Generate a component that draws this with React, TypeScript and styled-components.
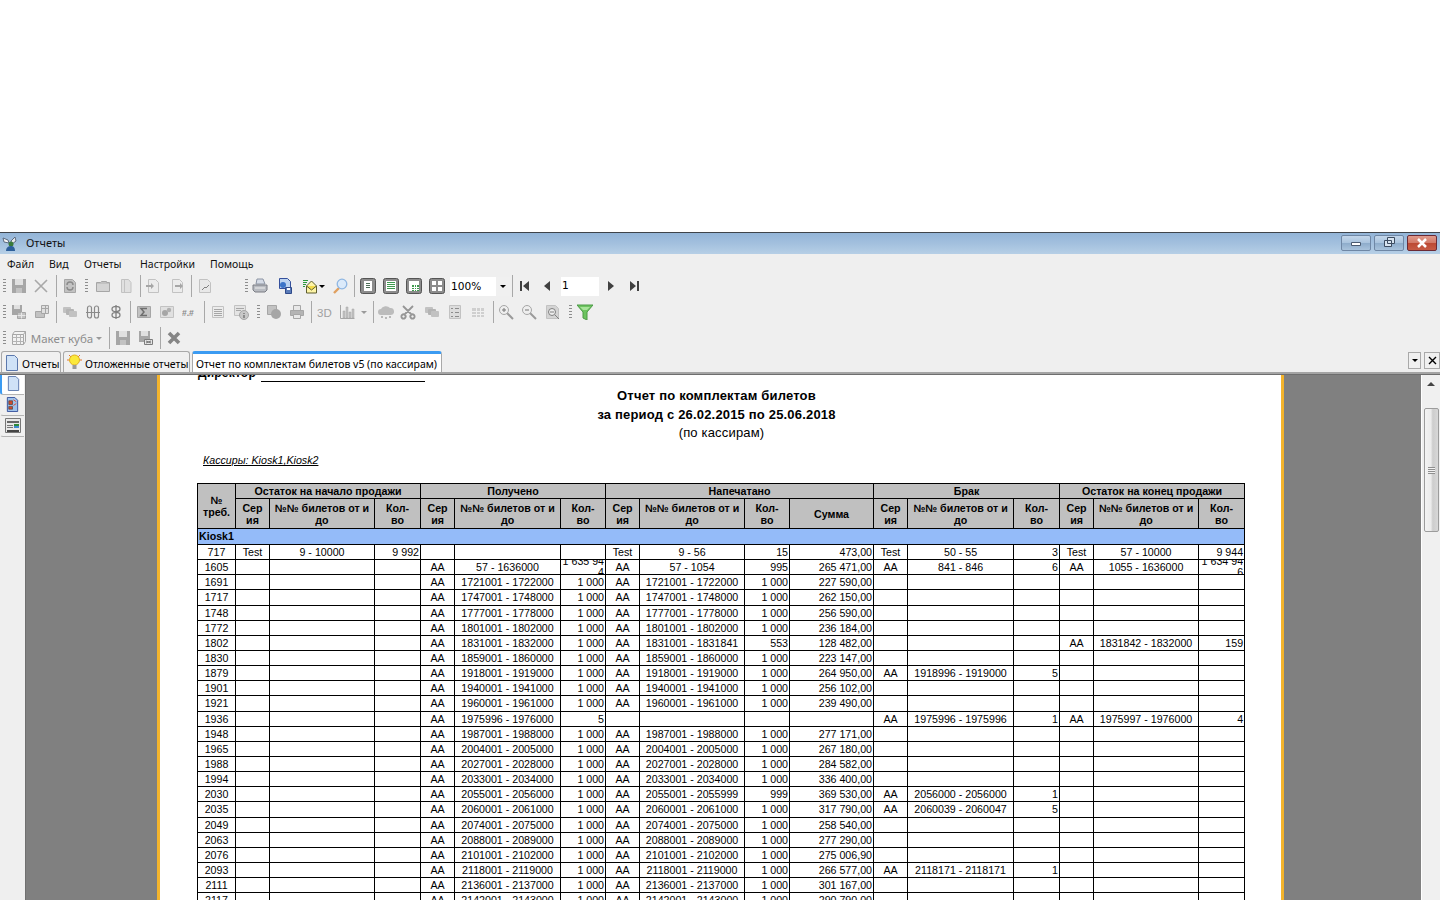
import * as React from "react";
import styled, { createGlobalStyle } from "styled-components";

const GlobalStyle = createGlobalStyle`
  html, body {
    margin: 0;
    padding: 0;
    height: 900px;
    overflow: hidden;
    background: #fff;
  }
`;

const Screen = styled.div`
  width: 1440px;
  height: 900px;
  display: flex;
  flex-direction: column;
  overflow: hidden;
  font-family: "Noto Sans", "DejaVu Sans", sans-serif;
  font-size: 10.5px;
  color: #000;
`;

const Blank = styled.div`
  height: 232px;
  flex: none;
  background: #fff;
`;

const TitleBar = styled.div`
  height: 21px;
  flex: none;
  display: flex;
  align-items: center;
  padding: 0 3px 0 2px;
  border-top: 1px solid #3f444a;
  background: linear-gradient(180deg, #93b5d8 0%, #a3c0de 50%, #b6cfe6 100%);
`;

const TitleText = styled.span`
  margin: 0 0 2px 8px;
  flex: 1;
  font-size: 11px;
  color: #111;
`;

const WinButton = styled.div<{ $close?: boolean }>`
  width: 30px;
  height: 16px;
  margin: 0 0 2px 3px;
  box-sizing: border-box;
  display: flex;
  align-items: center;
  justify-content: center;
  border: 1px solid ${p => (p.$close ? "#6b2a35" : "#6f87a5")};
  border-radius: 2px;
  background: ${p =>
    p.$close
      ? "linear-gradient(180deg, #e09a8c 0%, #d27a68 48%, #bc4a34 52%, #c65b45 100%)"
      : "linear-gradient(180deg, #c3d6ea 0%, #aac4de 48%, #8eaccb 52%, #a9c3dc 100%)"};
`;

const MenuBar = styled.div`
  height: 19px;
  flex: none;
  display: flex;
  align-items: center;
  background: #efefef;
  padding: 0 0 0 7px;
  box-sizing: border-box;
`;

const MenuItem = styled.span<{ $w: number }>`
  width: ${p => p.$w}px;
  color: #111;
`;

const ToolRow = styled.div`
  height: 26px;
  flex: none;
  display: flex;
  align-items: center;
  background: #efefef;
`;

const ToolCell = styled.div<{ $w: number; $ml?: number }>`
  width: ${p => p.$w}px;
  margin-left: ${p => p.$ml ?? 0}px;
  height: 22px;
  flex: none;
  display: flex;
  align-items: center;
  justify-content: center;
`;

const Grip = styled.div`
  width: 3px;
  height: 15px;
  background: repeating-linear-gradient(180deg, #8d8d8d 0 1px, #efefef 1px 3px);
`;

const Sep = styled.div`
  width: 1px;
  height: 22px;
  background: #a8a8a8;
`;

const Combo = styled.div`
  width: 100%;
  height: 19px;
  display: flex;
  align-items: center;
  justify-content: space-between;
  box-sizing: border-box;
  background: #fff;
  padding-left: 1px;
  font-family: "DejaVu Sans", sans-serif;
  font-size: 10.6px;
`;

const ComboArrow = styled.div`
  width: 14px;
  height: 100%;
  background: #f0f0f0;
  display: flex;
  align-items: center;
  justify-content: center;
`;

const DownTick = styled.div<{ $color?: string }>`
  width: 0;
  height: 0;
  border-left: 3px solid transparent;
  border-right: 3px solid transparent;
  border-top: 3px solid ${p => p.$color ?? "#000"};
`;

const PageInput = styled.div`
  width: 100%;
  height: 19px;
  background: #fff;
  box-sizing: border-box;
  padding: 2px 0 0 1px;
  font-family: "DejaVu Sans", sans-serif;
  font-size: 10.6px;
`;

const CubeLabel = styled.div`
  display: flex;
  align-items: center;
  gap: 3px;
  margin-right: 2px;
  color: #8d8d8d;
  font-size: 11.5px;
  white-space: nowrap;
`;

const TabBar = styled.div`
  height: 21px;
  flex: none;
  display: flex;
  align-items: flex-end;
  background: #efefef;
  padding-left: 1px;
  gap: 2px;
`;

const Tab = styled.div<{ $active?: boolean; $w: number }>`
  width: ${p => p.$w}px;
  height: 21px;
  box-sizing: border-box;
  display: flex;
  align-items: center;
  gap: ${p => (p.$active ? 0 : 2)}px;
  padding: ${p => (p.$active ? "1px 0 0 3px" : "3px 0 0 2px")};
  white-space: nowrap;
  border: 1px solid #a9a9a9;
  border-bottom: none;
  border-radius: 3px 3px 0 0;
  border-top: ${p => (p.$active ? "3px solid #3b9bf2" : "1px solid #a9a9a9")};
  background: ${p => (p.$active ? "#fff" : "#f0f0f0")};

  svg {
    flex: none;
    margin-top: -2px;
  }
`;

const TabTail = styled.div`
  flex: 1;
  display: flex;
  justify-content: flex-end;
  align-self: flex-start;
  margin-top: 1px;
  gap: 3px;
`;

const SquareBtn = styled.div<{ $w: number }>`
  width: ${p => p.$w}px;
  height: 17px;
  box-sizing: border-box;
  border: 1px solid #a9a9a9;
  display: flex;
  align-items: center;
  justify-content: center;
  background: #f0f0f0;
`;

const Divider = styled.div`
  height: 3px;
  flex: none;
  background: #a4a4a4;
  border-bottom: 1px solid #6e6e6e;
  box-sizing: border-box;
`;

const Body = styled.div`
  flex: 1;
  min-height: 0;
  display: flex;
  background: #808080;
`;

const SideStrip = styled.div`
  width: 25px;
  flex: none;
  background: #efefef;
  border-right: 1px solid #707070;
  display: flex;
  flex-direction: column;
  gap: 1px;
`;

const SideTab = styled.div<{ $active?: boolean }>`
  height: 20px;
  width: 24px;
  box-sizing: border-box;
  padding-bottom: 3px;
  display: flex;
  align-items: center;
  justify-content: center;
  border: 1px solid #b4b4b4;
  border-left: ${p => (p.$active ? "2px solid #3b9bf2" : "1px solid #efefef")};
  border-top: none;
  border-right: none;
  border-radius: 0 0 0 3px;
  background: ${p => (p.$active ? "#fff" : "#f0f0f0")};
`;

const GreyArea = styled.div`
  flex: 1;
  min-width: 0;
  padding: 0 137px 0 131px;
  overflow: hidden;
`;

const Page = styled.div`
  height: 100%;
  box-sizing: border-box;
  background: #fff;
  border-left: 3px solid #f4b42c;
  border-right: 3px solid #f4b42c;
  padding-left: 37px;
  overflow: hidden;
  font-family: "Liberation Sans", Arial, sans-serif;
  font-size: 10.67px;
`;

const Signature = styled.div`
  height: 7px;
  display: flex;
  align-items: flex-end;
  overflow: hidden;
  font-weight: bold;
  font-size: 12px;
  letter-spacing: 0.2px;
`;

const SignatureName = styled.span`
  width: 64px;
  flex: none;
  line-height: 12px;
  margin-bottom: 3px;
  padding-left: 1px;
  box-sizing: border-box;
`;

const SignatureLine = styled.div`
  width: 164px;
  height: 1px;
  background: #000;
`;

const HeadBlock = styled.div`
  width: 1039px;
  margin-top: 4px;
  text-align: center;
`;

const HeadLine = styled.div<{ $bold?: boolean; $h: number; $shift?: number }>`
  height: ${p => p.$h}px;
  line-height: ${p => p.$h}px;
  padding-left: ${p => p.$shift ?? 0}px;
  font-size: 13px;
  letter-spacing: 0.18px;
  font-weight: ${p => (p.$bold ? "bold" : "normal")};
`;

const Cashiers = styled.div`
  margin: 12px 0 16px 6px;
  height: 14px;
  line-height: 14px;
  font-style: italic;
  text-decoration: underline;
`;

const Report = styled.table`
  width: 1048px;
  table-layout: fixed;
  border-collapse: collapse;
  line-height: 12px;
`;

const Th = styled.th<{ $h?: number }>`
  border: 1px solid #000;
  background: #c0c0c0;
  font-weight: bold;
  padding: 0;
  height: ${p => p.$h ?? 14}px;
  text-align: center;
  vertical-align: middle;
`;

const GroupRow = styled.td`
  border: 1px solid #000;
  background: #94bbf9;
  font-weight: bold;
  height: 16px;
  box-sizing: border-box;
  padding: 0 0 1px 1px;
`;

const Td = styled.td<{ $right?: boolean }>`
  border: 1px solid #000;
  height: 14.15px;
  padding: ${p => (p.$right ? "0 1px 0 0" : "0")};
  text-align: ${p => (p.$right ? "right" : "center")};
  white-space: nowrap;
  overflow: hidden;
`;

const ClippedQty = styled.div`
  height: 14px;
  display: flex;
  align-items: center;
  justify-content: flex-end;
  overflow: hidden;
  white-space: normal;
  word-break: break-all;
  text-align: right;
  line-height: 11px;
`;

const Scrollbar = styled.div`
  width: 19px;
  flex: none;
  box-sizing: border-box;
  background: #f0f0f0;
  border-left: 1px solid #fff;
  display: flex;
  flex-direction: column;
  align-items: center;
`;

const ScrollArrow = styled.div`
  height: 17px;
  padding-top: 7px;
  box-sizing: border-box;
  margin-bottom: 16px;
`;

const UpTick = styled.div`
  width: 0;
  height: 0;
  border-left: 4px solid transparent;
  border-right: 4px solid transparent;
  border-bottom: 4px solid #444;
`;

const Thumb = styled.div`
  width: 15px;
  height: 124px;
  box-sizing: border-box;
  border: 1px solid #9c9c9c;
  border-radius: 2px;
  background: linear-gradient(90deg, #f4f4f4 0%, #ececec 45%, #cdcdcd 60%, #d8d8d8 100%);
  display: flex;
  align-items: center;
  justify-content: center;
`;

const ThumbGrip = styled.div`
  width: 7px;
  height: 7px;
  background: repeating-linear-gradient(180deg, #8f8f8f 0 1px, #f2f2f2 1px 2px);
`;

type IconName =
  | "save" | "cross" | "refresh" | "folder" | "doc" | "docIn" | "docOut" | "docChart"
  | "printer" | "docGlobe" | "mail" | "magnifier" | "viewPage" | "viewLines" | "viewGrid" | "viewFour"
  | "first" | "prev" | "next" | "last" | "saveGrid" | "folderGrid" | "cards" | "links" | "dollar"
  | "sigma" | "balls" | "hash" | "lines" | "info" | "pie" | "printGrey" | "threeD" | "bars"
  | "cloud" | "scissors" | "checklist" | "smallGrid" | "zoomIn" | "zoomOut" | "zoomDoc" | "filter"
  | "cube" | "saveAs" | "bigCross";

const G = { d: "#a6a6a6", m: "#c2c2c2", l: "#e0e0e0" };

function glyph(name: IconName) {
  switch (name) {
    case "save":
      return (
        <>
          <path d="M1 1h14v14H1z" fill={G.d} />
          <path d="M4 1h8v6H4z" fill={G.l} />
          <path d="M5 10h6v5H5z" fill={G.m} />
        </>
      );
    case "cross":
      return <path d="M2 2l12 12M14 2L2 14" stroke="#a8a8a8" strokeWidth="1.6" fill="none" />;
    case "refresh":
      return (
        <>
          <path d="M2.5 1.500h8l3 3v10h-11z" fill={G.m} stroke={G.d} />
          <path d="M5 7a3 3 0 0 1 6 0M11 9a3 3 0 0 1-6 0" stroke="#8a8a8a" strokeWidth="1.400" fill="none" />
        </>
      );
    case "folder":
      return (
        <>
          <path d="M1.500 4.500h4l1-1h5v1h3v9h-13z" fill={G.m} stroke={G.d} />
          <path d="M2 6h12v7H2z" fill={G.l} opacity=".6" />
        </>
      );
    case "doc":
      return <path d="M3.500 1.500h7l2.500 3v10h-9.500zM6.500 1.500v13" fill={G.l} stroke={G.m} />;
    case "docIn":
    case "docOut":
      return (
        <>
          <path d="M3.500 1.500h7l3 3v10h-10z" fill="#ececec" stroke={G.m} />
          <path d={name === "docIn" ? "M1 7h5V5l3 3-3 3V9H1z" : "M6 7h5V5l3 3-3 3V9H6z"} fill={G.d} />
        </>
      );
    case "docChart":
      return (
        <>
          <path d="M2.500 1.500h8l3 3v10h-11z" fill="#e8e8e8" stroke={G.m} />
          <path d="M5 12l3-3 1 1 3-3" stroke="#808080" fill="none" />
        </>
      );
    case "printer":
      return (
        <>
          <path d="M5 1h6l2 5H4z" fill="#d5dbe6" stroke="#8c94a3" />
          <path d="M1 7h14v5l-2 2H3l-2-2z" fill="#b9bcc2" stroke="#7a7d84" />
          <path d="M3 10h10" stroke="#eee" />
        </>
      );
    case "docGlobe":
      return (
        <>
          <path d="M2.500 .500h8l3 3v7h-11z" fill="#bcd3f0" stroke="#35509c" />
          <circle cx="6" cy="7" r="3" fill="#3b74c8" />
          <path d="M8.500 9.500h6v6h-6z" fill="#5a7bb8" stroke="#2f4a8a" />
          <path d="M10 10h3v2h-3z" fill="#fff" />
        </>
      );
    case "mail":
      return (
        <>
          <path d="M3.500 8l5-5 5 5v7h-10z" fill="#fdf4a6" stroke="#5d5d2f" />
          <path d="M3.500 8l5 4 5-4" fill="#f5dc4a" stroke="#5d5d2f" />
          <path d="M0 2.500h5M0 4.500h4M0 6.500h3M0 8.500h2" stroke="#2a9a3a" />
        </>
      );
    case "magnifier":
      return (
        <>
          <path d="M2 15l5-5" stroke="#e0a060" strokeWidth="2.400" />
          <circle cx="10" cy="6" r="4.800" fill="#dbeafa" stroke="#8fb6e2" strokeWidth="1.300" />
        </>
      );
    case "viewPage":
    case "viewLines":
    case "viewGrid":
    case "viewFour":
      return (
        <>
          <rect x=".5" y=".5" width="15" height="15" rx="2" fill="#8c8c8c" stroke="#555" />
          {name === "viewFour" ? (
            <path d="M3 3h4v4H3zM9 3h4v4H9zM3 9h4v4H3zM9 9h4v4H9z" fill="#fff" />
          ) : (
            <path d={name === "viewPage" ? "M4 3h8v10H4z" : "M3 3h10v10H3z"} fill="#fff" />
          )}
          {name === "viewPage" && <path d="M6 5.500h4M6 7.500h4M6 9.500h4" stroke="#4e6e58" />}
          {name === "viewLines" && <path d="M4 4.500h8M4 6.500h8M4 8.500h8M4 10.500h8" stroke="#3e9a4e" />}
          {name === "viewGrid" && <path d="M6 7h7v6H6z" fill="#3e9a4e" />}
          {name === "viewGrid" && <path d="M6 9.500h7M6 11.500h7M8.500 7v6M10.500 7v6" stroke="#fff" />}
        </>
      );
    case "first":
      return <path d="M3 3h2v10H3zM12 3v10L6 8z" fill="#404040" />;
    case "prev":
      return <path d="M11 3v10L5 8z" fill="#404040" />;
    case "next":
      return <path d="M5 3v10l6-5z" fill="#404040" />;
    case "last":
      return <path d="M4 3v10l6-5zM11 3h2v10h-2z" fill="#404040" />;
    case "saveGrid":
      return (
        <>
          <path d="M1 1h10v10H1z" fill={G.d} />
          <path d="M3 1h6v4H3z" fill={G.l} />
          <path d="M6.500 8.500h8v6h-8z" fill={G.m} stroke={G.d} />
          <path d="M6.500 11.500h8M10.500 8.500v6" stroke="#e8e8e8" />
        </>
      );
    case "folderGrid":
      return (
        <>
          <path d="M1.500 7.500h9v6h-9z" fill={G.m} stroke={G.d} />
          <path d="M7.500 1.500h7v8h-7z" fill={G.l} stroke={G.d} />
          <path d="M7.500 4.500h7M11.500 1.500v8" stroke={G.d} />
        </>
      );
    case "cards":
      return (
        <>
          <rect x="1" y="3" width="8" height="6" rx="1" fill={G.m} />
          <rect x="4" y="5" width="8" height="6" rx="1" fill="#b4b4b4" />
          <rect x="7" y="7" width="8" height="6" rx="1" fill={G.m} />
        </>
      );
    case "links":
      return (
        <path
          d="M2.500 4a2 2 0 0 1 4 0v8a2 2 0 0 1-4 0zM9.500 4a2 2 0 0 1 4 0v8a2 2 0 0 1-4 0zM1 8.500h14"
          fill="none"
          stroke="#8a8a8a"
          strokeWidth="1.200"
        />
      );
    case "dollar":
      return (
        <path
          d="M4 5a3 2 0 0 1 8 0 3 2 0 0 1-8 0zM4 11a3 2 0 0 1 8 0 3 2 0 0 1-8 0zM8 1v14"
          fill="none"
          stroke="#808080"
          strokeWidth="1.300"
        />
      );
    case "sigma":
      return (
        <>
          <path d="M1.500 2.500h13v11h-13z" fill={G.m} stroke={G.d} />
          <path d="M11 4.500H5l3 3.500-3 3.500h6" fill="none" stroke="#6e6e6e" strokeWidth="1.500" />
        </>
      );
    case "balls":
      return (
        <>
          <path d="M1.500 2.500h13v11h-13z" fill={G.l} stroke={G.m} />
          <circle cx="6" cy="9" r="3" fill={G.d} />
          <circle cx="10" cy="6" r="2.200" fill="#b0b0b0" />
        </>
      );
    case "hash":
      return (
        <text x="0" y="12" fontFamily="Liberation Sans, sans-serif" fontSize="8.500" fontWeight="bold" fill="#8a8a8a">
          #.#
        </text>
      );
    case "lines":
      return (
        <>
          <path d="M2.500 2.500h11v11h-11z" fill="#ececec" stroke={G.m} />
          <path d="M4 5.500h8M4 7.500h8M4 9.500h8M4 11.500h8" stroke={G.d} />
        </>
      );
    case "info":
      return (
        <>
          <path d="M1.500 1.500h11v10h-11z" fill="#e4e4e4" stroke={G.m} />
          <path d="M3 4.500h8M3 6.500h5" stroke={G.d} />
          <circle cx="11" cy="11" r="4.500" fill="#c8c8c8" stroke={G.d} />
          <path d="M11 9v1M11 11v3" stroke="#666" strokeWidth="1.200" />
        </>
      );
    case "pie":
      return (
        <>
          <path d="M1.500 1.500h9v9h-9z" fill={G.m} stroke={G.d} />
          <circle cx="10" cy="10" r="5" fill={G.d} />
        </>
      );
    case "printGrey":
      return (
        <>
          <path d="M4.500 1.500h7v5h-7z" fill="#e8e8e8" stroke={G.d} />
          <path d="M1.500 6.500h13v5h-13z" fill="#b4b4b4" stroke={G.d} />
          <path d="M4.500 10.500h7v4h-7z" fill="#e8e8e8" stroke={G.d} />
        </>
      );
    case "threeD":
      return (
        <text x="0" y="12.500" fontFamily="Liberation Sans, sans-serif" fontSize="11.500" fill="#a0a0a0">
          3D
        </text>
      );
    case "bars":
      return (
        <>
          <path d="M1.500 1v13.500h14" fill="none" stroke={G.d} />
          <path d="M4 7h2v7H4zM7 3h2v11H7zM10 8h2v6h-2zM13 5h2v9h-2z" fill={G.m} stroke={G.d} strokeWidth=".5" />
        </>
      );
    case "cloud":
      return (
        <>
          <path d="M3 11a3 3 0 0 1 0-6 5 4 0 0 1 9-1 3.500 3.500 0 0 1 1 7z" fill="#bcbcbc" />
          <path d="M3 13h2M7 14h2M11 13h2" stroke={G.d} strokeWidth="1.500" />
        </>
      );
    case "scissors":
      return (
        <path
          d="M3 2l9 9M13 2l-9 9M2 14a2 2 0 1 0 3-3 2 2 0 0 0-3 3zM11 11a2 2 0 1 0 3 3 2 2 0 0 0-3-3z"
          fill="none"
          stroke="#969696"
          strokeWidth="1.800"
        />
      );
    case "checklist":
      return (
        <>
          <path d="M2.500 1.500h11v13h-11z" fill="#dcdcdc" stroke={G.m} />
          <path d="M4 4.500h2M8 4.500h4M4 8.500h2M8 8.500h4M4 12.500h2M8 12.500h4" stroke="#8c8c8c" />
        </>
      );
    case "smallGrid":
      return (
        <>
          <path d="M2 4h12v9H2z" fill="#cfcfcf" />
          <path d="M2 7.500h12M2 10.500h12M6.500 4v9M10.500 4v9" stroke="#f0f0f0" />
        </>
      );
    case "zoomIn":
    case "zoomOut":
      return (
        <>
          <path d="M9 9l6 6" stroke="#9a9a9a" strokeWidth="2" />
          <circle cx="6" cy="6" r="4.500" fill="#eee" stroke={G.d} />
          <path d={name === "zoomIn" ? "M4 6h4M6 4v4" : "M4 6h4"} stroke="#777" />
        </>
      );
    case "zoomDoc":
      return (
        <>
          <path d="M1.500 1.500h9l3 3v10h-12z" fill="#d4d4d4" stroke={G.m} />
          <circle cx="7" cy="8" r="3.500" fill="#eee" stroke="#808080" />
          <path d="M5 8h4M10 11l4 4" stroke="#808080" />
        </>
      );
    case "filter":
      return (
        <>
          <path d="M0 1h16L10 8v8l-4-2V8z" fill="#6cc45f" stroke="#4c9a46" />
          <path d="M3 3h10l-3 3H6z" fill="#a8e39a" />
        </>
      );
    case "cube":
      return (
        <>
          <path d="M1.500 4.500h11v10h-11zM12.500 4.500l2-3h-11l-2 3M14.500 1.500v10l-2 3" fill="#f2f2f2" stroke="#a6a6a6" />
          <path d="M1.500 7.500h11M1.500 11.500h11M5.500 4.500v10M9.500 4.500v10" stroke="#b4b4b4" />
        </>
      );
    case "saveAs":
      return (
        <>
          <path d="M1 1h11v11H1z" fill={G.d} />
          <path d="M3 1h7v5H3z" fill={G.l} />
          <path d="M6.500 9.500h8v5h-8z" fill="#e4e4e4" stroke="#7c7c7c" />
          <path d="M8 11l5 2M13 11l-5 2" stroke="#777" />
        </>
      );
    case "bigCross":
      return <path d="M3 3l10 10M13 3L3 13" stroke="#858585" strokeWidth="3.600" />;
  }
}

function Icon({ name }: { name: IconName }) {
  return (
    <svg width="16" height="16" viewBox="0 0 16 16">
      {glyph(name)}
    </svg>
  );
}

type Tool =
  | { kind: "grip" | "sep" | "icon-drop"; w: number; ml?: number; icon?: IconName }
  | { kind: "icon"; w: number; ml?: number; icon: IconName };

const i = (icon: IconName, w: number, ml?: number): Tool => ({ kind: "icon", icon, w, ml });
const grip = (w: number, ml?: number): Tool => ({ kind: "grip", w, ml });
const sep = (w: number, ml?: number): Tool => ({ kind: "sep", w, ml });

const rowOneLeft: Tool[] = [
  grip(8), i("save", 22), i("cross", 22), sep(8), i("refresh", 20), grip(12), i("folder", 22), i("doc", 24),
  sep(4), i("docIn", 22), i("docOut", 26), sep(2), i("docChart", 26), grip(12, 22), i("printer", 16),
  i("docGlobe", 34), { kind: "icon-drop", icon: "mail", w: 24 }, i("magnifier", 27), sep(2),
  i("viewPage", 26), i("viewLines", 20), i("viewGrid", 26), i("viewFour", 20),
];

const rowOneRight: Tool[] = [sep(2, 1), i("first", 24), i("prev", 20)];
const rowOneEnd: Tool[] = [i("next", 24), i("last", 22)];

const rowTwo: Tool[] = [
  grip(8), i("saveGrid", 22), i("folderGrid", 24), sep(4), i("cards", 24), i("links", 22), i("dollar", 24),
  sep(4), i("sigma", 24), i("balls", 22), i("hash", 24), sep(4), i("lines", 24), i("info", 22), grip(12),
  i("pie", 20), i("printGrey", 26), sep(2), i("threeD", 26), i("bars", 18),
];

const rowTwoEnd: Tool[] = [
  sep(2), i("cloud", 24), i("scissors", 20), i("cards", 28), i("checklist", 18), i("smallGrid", 28), sep(2),
  i("zoomIn", 24), i("zoomOut", 22), i("zoomDoc", 26), grip(8), i("filter", 22),
];

const rowThreeEnd: Tool[] = [sep(8), i("save", 20), i("saveAs", 26), sep(2), i("bigCross", 26)];

function Tools({ items }: { items: Tool[] }) {
  return (
    <>
      {items.map((t, idx) => (
        <ToolCell key={idx} $w={t.w} $ml={t.ml}>
          {t.kind === "grip" && <Grip />}
          {t.kind === "sep" && <Sep />}
          {t.kind === "icon" && <Icon name={t.icon} />}
          {t.kind === "icon-drop" && (
            <>
              <Icon name={t.icon as IconName} />
              <DownTick />
            </>
          )}
        </ToolCell>
      ))}
    </>
  );
}

type Triple = [string, string, string];

interface Row {
  id: string;
  start?: Triple;
  got?: Triple;
  printed?: [string, string, string, string];
  spoiled?: Triple;
  end?: Triple;
}

// most rows: a whole pack was received and printed
const full = (id: string, range: string, sum: string, extra?: Partial<Row>): Row => ({
  id,
  got: ["AA", range, "1 000"],
  printed: ["AA", range, "1 000", sum],
  ...extra,
});

const rows: Row[] = [
  {
    id: "717",
    start: ["Test", "9 - 10000", "9 992"],
    printed: ["Test", "9 - 56", "15", "473,00"],
    spoiled: ["Test", "50 - 55", "3"],
    end: ["Test", "57 - 10000", "9 944"],
  },
  {
    id: "1605",
    got: ["AA", "57 - 1636000", "1 635 944"],
    printed: ["AA", "57 - 1054", "995", "265 471,00"],
    spoiled: ["AA", "841 - 846", "6"],
    end: ["AA", "1055 - 1636000", "1 634 946"],
  },
  full("1691", "1721001 - 1722000", "227 590,00"),
  full("1717", "1747001 - 1748000", "262 150,00"),
  full("1748", "1777001 - 1778000", "256 590,00"),
  full("1772", "1801001 - 1802000", "236 184,00"),
  {
    id: "1802",
    got: ["AA", "1831001 - 1832000", "1 000"],
    printed: ["AA", "1831001 - 1831841", "553", "128 482,00"],
    end: ["AA", "1831842 - 1832000", "159"],
  },
  full("1830", "1859001 - 1860000", "223 147,00"),
  full("1879", "1918001 - 1919000", "264 950,00", { spoiled: ["AA", "1918996 - 1919000", "5"] }),
  full("1901", "1940001 - 1941000", "256 102,00"),
  full("1921", "1960001 - 1961000", "239 490,00"),
  {
    id: "1936",
    got: ["AA", "1975996 - 1976000", "5"],
    spoiled: ["AA", "1975996 - 1975996", "1"],
    end: ["AA", "1975997 - 1976000", "4"],
  },
  full("1948", "1987001 - 1988000", "277 171,00"),
  full("1965", "2004001 - 2005000", "267 180,00"),
  full("1988", "2027001 - 2028000", "284 582,00"),
  full("1994", "2033001 - 2034000", "336 400,00"),
  {
    id: "2030",
    got: ["AA", "2055001 - 2056000", "1 000"],
    printed: ["AA", "2055001 - 2055999", "999", "369 530,00"],
    spoiled: ["AA", "2056000 - 2056000", "1"],
  },
  full("2035", "2060001 - 2061000", "317 790,00", { spoiled: ["AA", "2060039 - 2060047", "5"] }),
  full("2049", "2074001 - 2075000", "258 540,00"),
  full("2063", "2088001 - 2089000", "277 290,00"),
  full("2076", "2101001 - 2102000", "275 006,90"),
  full("2093", "2118001 - 2119000", "266 577,00", { spoiled: ["AA", "2118171 - 2118171", "1"] }),
  full("2111", "2136001 - 2137000", "301 167,00"),
  full("2117", "2142001 - 2143000", "290 790,00"),
];

const colWidths = [38, 34, 105, 46, 34, 106, 45, 34, 105, 45, 84, 34, 106, 46, 34, 105, 46];

function Qty({ value }: { value?: string }) {
  return (
    <Td $right>{value && value.length > 7 ? <ClippedQty>{value}</ClippedQty> : value}</Td>
  );
}

function Group({ data }: { data?: Triple }) {
  return (
    <>
      <Td>{data?.[0]}</Td>
      <Td>{data?.[1]}</Td>
      <Qty value={data?.[2]} />
    </>
  );
}

function ColumnHeads() {
  return (
    <>
      <Th $h={29}>Сер<br />ия</Th>
      <Th $h={29}>№№ билетов от и<br />до</Th>
      <Th $h={29}>Кол-<br />во</Th>
    </>
  );
}

export default function App() {
  return (
    <Screen>
      <GlobalStyle />
      <Blank />
      <TitleBar>
        <svg width="16" height="16" viewBox="0 0 16 16">
          <path d="M1 2l5 2 1 3-5-1z" fill="#f4f4f4" stroke="#5b6b80" />
          <path d="M13 1L9 5l1 3 4-3z" fill="#eaeaea" stroke="#5b6b80" />
          <circle cx="9" cy="8" r="2.500" fill="#3a7a3a" />
          <path d="M4 15c0-4 3-5 5-5s4 1 4 5z" fill="#2d5f9a" />
        </svg>
        <TitleText>Отчеты</TitleText>
        <WinButton>
          <svg width="12" height="8" viewBox="0 0 12 8">
            <path d="M1.500 3.500h9v3h-9z" fill="#fff" stroke="#4a5a70" />
          </svg>
        </WinButton>
        <WinButton>
          <svg width="13" height="11" viewBox="0 0 13 11">
            <path d="M4.500.5h7v6h-7zM1.500 3.500h7v6h-7z" fill="#d8e4f0" stroke="#3d4c60" />
          </svg>
        </WinButton>
        <WinButton $close>
          <svg width="12" height="10" viewBox="0 0 12 10">
            <path d="M2 1l8 8M10 1L2 9" stroke="#fff" strokeWidth="2.500" />
          </svg>
        </WinButton>
      </TitleBar>
      <MenuBar>
        <MenuItem $w={42}>Файл</MenuItem>
        <MenuItem $w={35}>Вид</MenuItem>
        <MenuItem $w={56}>Отчеты</MenuItem>
        <MenuItem $w={70}>Настройки</MenuItem>
        <MenuItem $w={60}>Помощь</MenuItem>
      </MenuBar>
      <ToolRow>
        <Tools items={rowOneLeft} />
        <ToolCell $w={60} $ml={3}>
          <Combo>
            100%
            <ComboArrow>
              <DownTick />
            </ComboArrow>
          </Combo>
        </ToolCell>
        <Tools items={rowOneRight} />
        <ToolCell $w={38} $ml={4}>
          <PageInput>1</PageInput>
        </ToolCell>
        <Tools items={rowOneEnd} />
      </ToolRow>
      <ToolRow>
        <Tools items={rowTwo} />
        <ToolCell $w={16}>
          <DownTick $color="#9a9a9a" />
        </ToolCell>
        <Tools items={rowTwoEnd} />
      </ToolRow>
      <ToolRow>
        <Tools items={[grip(8), i("cube", 22)]} />
        <ToolCell $w={75}>
          <CubeLabel>
            Макет куба
            <DownTick $color="#9a9a9a" />
          </CubeLabel>
        </ToolCell>
        <Tools items={rowThreeEnd} />
      </ToolRow>
      <TabBar>
        <Tab $w={60}>
          <svg width="16" height="16" viewBox="0 0 16 16">
            <path d="M2.500 .5h8l3 3v12h-11z" fill="#cfe2f7" stroke="#5b78ad" />
          </svg>
          Отчеты
        </Tab>
        <Tab $w={127}>
          <svg width="17" height="17" viewBox="0 0 17 17">
            <path d="M1 6H3M14 6h2M3 1l2 2M14 1l-2 2" stroke="#e8742a" />
            <circle cx="8.500" cy="6" r="5" fill="#fbe93a" stroke="#e0b020" />
            <path d="M6.500 11h4v4h-4z" fill="#9a9a9a" />
          </svg>
          Отложенные отчеты
        </Tab>
        <Tab $w={250} $active>
          Отчет по комплектам билетов v5 (по кассирам)
        </Tab>
        <TabTail>
          <SquareBtn $w={13}>
            <DownTick />
          </SquareBtn>
          <SquareBtn $w={16}>
            <svg width="9" height="9" viewBox="0 0 9 9">
              <path d="M1 1l7 7M8 1L1 8" stroke="#000" strokeWidth="1.400" />
            </svg>
          </SquareBtn>
        </TabTail>
      </TabBar>
      <Divider />
      <Body>
        <SideStrip>
          <SideTab $active>
            <svg width="15" height="15" viewBox="0 0 16 16">
              <path d="M2.500 .5h8l3 3v12h-11z" fill="#cfe2f7" stroke="#5b78ad" />
            </svg>
          </SideTab>
          <SideTab>
            <svg width="15" height="15" viewBox="0 0 16 16">
              <path d="M2.500 .5h8l3 3v12h-11z" fill="#9fc2ea" stroke="#35509c" />
              <path d="M4 4h4v4H4zM4 10h4v3H4z" fill="#d04a2a" stroke="#333" strokeWidth=".6" />
              <path d="M9 3l3 2M9 9l3-2" stroke="#e8442a" />
            </svg>
          </SideTab>
          <SideTab>
            <svg width="16" height="15" viewBox="0 0 16 15">
              <path d="M.5.5h15v14H.5z" fill="#e8e8e8" stroke="#777" />
              <path d="M2 3h12v2H2z" fill="#666" />
              <path d="M2 7h6v1H2zM2 9h6v1H2z" fill="#777" />
              <path d="M9 6h5v2H9z" fill="#2f8a3a" />
              <path d="M9 8h5v2H9z" fill="#3f8bd0" />
              <path d="M2 12h12v2H2z" fill="#444" />
            </svg>
          </SideTab>
        </SideStrip>
        <GreyArea>
          <Page>
            <Signature>
              <SignatureName>Директор</SignatureName>
              <SignatureLine />
            </Signature>
            <HeadBlock>
              <HeadLine $bold $h={19}>Отчет по комплектам билетов</HeadLine>
              <HeadLine $bold $h={19}>за период с 26.02.2015 по 25.06.2018</HeadLine>
              <HeadLine $h={17} $shift={10}>(по кассирам)</HeadLine>
            </HeadBlock>
            <Cashiers>Кассиры: Kiosk1,Kiosk2</Cashiers>
            <Report>
              <colgroup>
                {colWidths.map((w, idx) => (
                  <col key={idx} style={{ width: w }} />
                ))}
              </colgroup>
              <thead>
                <tr>
                  <Th rowSpan={2}>№<br />треб.</Th>
                  <Th colSpan={3}>Остаток на начало продажи</Th>
                  <Th colSpan={3}>Получено</Th>
                  <Th colSpan={4}>Напечатано</Th>
                  <Th colSpan={3}>Брак</Th>
                  <Th colSpan={3}>Остаток на конец продажи</Th>
                </tr>
                <tr>
                  <ColumnHeads />
                  <ColumnHeads />
                  <ColumnHeads />
                  <Th $h={29}>Сумма</Th>
                  <ColumnHeads />
                  <ColumnHeads />
                </tr>
              </thead>
              <tbody>
                <tr>
                  <GroupRow colSpan={17}>Kiosk1</GroupRow>
                </tr>
                {rows.map(row => (
                  <tr key={row.id}>
                    <Td>{row.id}</Td>
                    <Group data={row.start} />
                    <Group data={row.got} />
                    <Td>{row.printed?.[0]}</Td>
                    <Td>{row.printed?.[1]}</Td>
                    <Qty value={row.printed?.[2]} />
                    <Td $right>{row.printed?.[3]}</Td>
                    <Group data={row.spoiled} />
                    <Group data={row.end} />
                  </tr>
                ))}
              </tbody>
            </Report>
          </Page>
        </GreyArea>
        <Scrollbar>
          <ScrollArrow>
            <UpTick />
          </ScrollArrow>
          <Thumb>
            <ThumbGrip />
          </Thumb>
        </Scrollbar>
      </Body>
    </Screen>
  );
}
